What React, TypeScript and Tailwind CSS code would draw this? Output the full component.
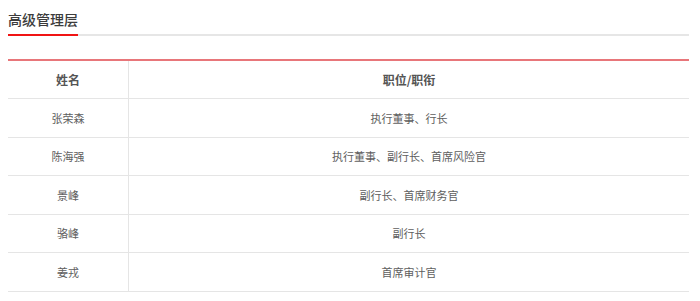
const rows = [
  { name: '张荣森', title: '执行董事、行长' },
  { name: '陈海强', title: '执行董事、副行长、首席风险官' },
  { name: '景峰', title: '副行长、首席财务官' },
  { name: '骆峰', title: '副行长' },
  { name: '姜戎', title: '首席审计官' },
]

export default function App() {
  return (
    <div
      className="h-[301px] w-[700px] overflow-hidden bg-white pl-[8px] pr-[11px]"
      style={{ fontFamily: '"Noto Sans CJK SC", "Liberation Sans", sans-serif' }}
    >
      <div className="border-b-2 border-[#e6e6e6]">
        <div className="-mb-[2px] inline-block border-b-2 border-[#f01414] pt-[9px] pb-[5px] text-[14px] font-medium leading-[20px] text-[#3c3c3c]">
          高级管理层
        </div>
      </div>

      <div className="mt-[23px] border-t-2 border-[#e8767a] text-center">
        <div className="grid h-[38px] grid-cols-[121px_1fr] border-b border-[#e5e5e5] text-[12px] font-bold text-[#555]">
          <div className="flex items-center justify-center border-r border-[#e5e5e5]">姓名</div>
          <div className="flex items-center justify-center">职位/职衔</div>
        </div>
        {rows.map((r) => (
          <div
            key={r.name}
            className="grid h-[38.6px] grid-cols-[121px_1fr] border-b border-[#e5e5e5] text-[11px] text-[#5e5e5e]"
          >
            <div className="flex items-center justify-center border-r border-[#e5e5e5]">{r.name}</div>
            <div className="flex items-center justify-center">{r.title}</div>
          </div>
        ))}
      </div>
    </div>
  )
}
